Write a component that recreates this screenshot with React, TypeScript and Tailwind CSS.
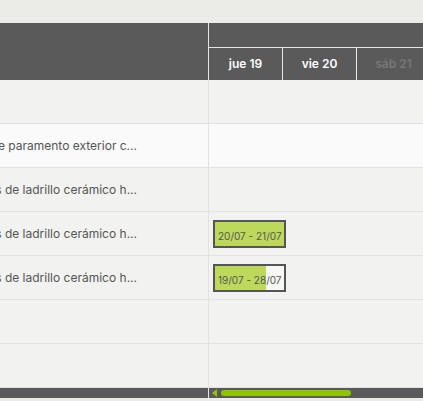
const days = [
  { label: 'jue 19', dim: false },
  { label: 'vie 20', dim: false },
  { label: 'sáb 21', dim: true },
];

interface Row {
  text: string;
  light?: boolean;
  bar?: { label: string; progress: number };
}

const rows: Row[] = [
  { text: '' },
  { text: 'Revestimiento de paramento exterior c...', light: true },
  { text: 'Fábricas de ladrillo cerámico h...' },
  { text: 'Fábricas de ladrillo cerámico h...', bar: { label: '20/07 - 21/07', progress: 100 } },
  { text: 'Fábricas de ladrillo cerámico h...', bar: { label: '19/07 - 28/07', progress: 74 } },
  { text: '' },
  { text: '' },
];

export default function App() {
  return (
    <div
      className="w-[423px] h-[401px] overflow-hidden bg-[#ebebe7] flex flex-col"
      style={{ fontFamily: 'Inter, "Noto Sans", sans-serif' }}
    >
      <div className="h-[23px] shrink-0" />

      {/* header */}
      <div className="flex h-[57px] shrink-0 bg-[#5a5a5a]">
        <div className="w-[209px] shrink-0 border-r border-[#e6e6e4]" />
        <div className="flex-1 flex flex-col">
          <div className="h-[25px] border-b border-[#e6e6e4]" />
          <div className="flex-1 flex">
            {days.map((d) => (
              <div
                key={d.label}
                className={`w-[74px] shrink-0 border-r border-[#e6e6e4] flex items-center justify-center text-[12px] font-semibold ${
                  d.dim ? 'text-[#777777]' : 'text-white'
                }`}
              >
                {d.label}
              </div>
            ))}
          </div>
        </div>
      </div>

      {/* rows */}
      <div className="flex flex-col">
        {rows.map((r, i) => (
          <div
            key={i}
            className={`flex h-[44px] border-b border-[#e2e2e0] ${r.light ? 'bg-[#fafafa]' : 'bg-[#f2f2f0]'}`}
          >
            <div className="w-[209px] shrink-0 border-r border-[#e2e2e0] flex items-center">
              {r.text && (
                <div className="w-[137px] overflow-hidden flex justify-end whitespace-nowrap text-[12px] text-[#555555]">
                  {r.text}
                </div>
              )}
            </div>
            <div className="flex-1 flex items-center pl-[4px]">
              {r.bar && (
                <div className="relative w-[73px] h-[28px] border-2 border-[#555555] bg-[#f7f7f5]">
                  <div
                    className="absolute inset-y-0 left-0 bg-[#bcd95c]"
                    style={{ width: `${r.bar.progress}%` }}
                  />
                  <span className="relative pl-[3px] leading-[22px] text-[10px] text-[#555555] whitespace-nowrap">
                    {r.bar.label}
                  </span>
                </div>
              )}
            </div>
          </div>
        ))}
      </div>

      {/* scrollbar */}
      <div className="flex h-[10px] shrink-0 bg-[#5a5a5a]">
        <div className="w-[209px] shrink-0 border-r border-[#e6e6e4]" />
        <div className="flex-1 flex items-center pl-[3px] gap-[4px]">
          <div className="w-0 h-0 border-y-[4px] border-y-transparent border-r-[5px] border-r-[#8fc400]" />
          <div className="w-[130px] h-[6px] rounded-full bg-[#8fc400]" />
        </div>
      </div>
    </div>
  );
}
